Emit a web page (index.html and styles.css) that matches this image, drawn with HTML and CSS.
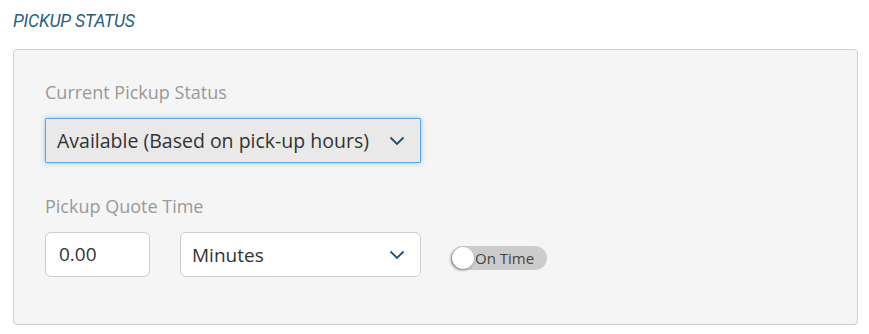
FILE: index.html
```html
<!DOCTYPE html>
<html>
<head>
  <title>Pickup Status</title>
  <meta name="viewport" content="width=device-width, initial-scale=1">
  <link rel="stylesheet" href="styles.css">
</head>
<body>
  <h3 class="section-title">PICKUP STATUS</h3>

  <div class="panel">
    <label class="field-label">Current Pickup Status</label>
    <div class="select select-focus">
      <span>Available (Based on pick-up hours)</span>
      <svg class="chevron" width="16" height="10" viewBox="0 0 16 10"><path d="M1.5 1.5 L8 8 L14.5 1.5" fill="none" stroke="#1f4e6e" stroke-width="1.8"/></svg>
    </div>

    <label class="field-label quote-label">Pickup Quote Time</label>
    <div class="quote-row">
      <div class="text-input">0.00</div>
      <div class="select select-units">
        <span>Minutes</span>
        <svg class="chevron" width="16" height="10" viewBox="0 0 16 10"><path d="M1.5 1.5 L8 8 L14.5 1.5" fill="none" stroke="#1f4e6e" stroke-width="1.8"/></svg>
      </div>
      <div class="toggle">
        <span class="knob"></span>
        <span class="toggle-text">On Time</span>
      </div>
    </div>
  </div>
</body>
</html>
```

FILE: styles.css
```css
body {
  margin: 0;
  padding: 12px 11px 0 13px;
  font-family: "Open Sans", sans-serif;
  background-color: #fff;
}
.section-title {
  margin: 0 0 19px 0;
  font-family: Roboto, sans-serif;
  font-style: italic;
  font-weight: 400;
  font-size: 17.6px;
  line-height: 18px;
  color: #2b5d7e;
  letter-spacing: -0.2px;
}
.panel {
  box-sizing: border-box;
  height: 276px;
  padding: 30px 31px 0 31px;
  background-color: #f5f5f5;
  border: 1px solid #cfcfcf;
  border-radius: 4px;
}
.field-label {
  display: block;
  font-size: 18px;
  line-height: 24px;
  color: #999;
  margin-bottom: 14px;
}
.quote-label {
  margin-top: 31px;
}
.select {
  box-sizing: border-box;
  display: flex;
  align-items: center;
  justify-content: space-between;
  height: 45px;
  padding: 0 15px 0 11px;
  font-size: 19px;
  color: #333;
  background-color: #fff;
  border: 1px solid #ccc;
  border-radius: 4px;
}
.select-focus {
  width: 376px;
  font-size: 19.5px;
  background-color: #e9e9e9;
  border: 1px solid #5aa7ee;
  border-radius: 1px;
  box-shadow: 0 0 5px rgba(102, 175, 233, 0.7);
}
.chevron {
  display: block;
}
.quote-row {
  display: flex;
  align-items: center;
}
.text-input {
  box-sizing: border-box;
  width: 105px;
  height: 45px;
  padding: 0 13px;
  line-height: 43px;
  font-size: 19px;
  color: #333;
  background-color: #fff;
  border: 1px solid #ccc;
  border-radius: 6px;
}
.select-units {
  width: 241px;
  margin-left: 30px;
  border-radius: 6px;
}
.toggle {
  position: relative;
  display: flex;
  align-items: center;
  width: 96px;
  height: 24px;
  margin-left: 30px;
  margin-top: 7px;
  background-color: #ccc;
  border-radius: 12px;
}
.knob {
  width: 22px;
  height: 22px;
  margin-left: 1px;
  border-radius: 50%;
  background-color: #fff;
  box-shadow: -1px 1px 3px rgba(0, 0, 0, 0.45);
}
.toggle-text {
  margin-left: 1px;
  font-size: 15px;
  color: #444;
}
```
